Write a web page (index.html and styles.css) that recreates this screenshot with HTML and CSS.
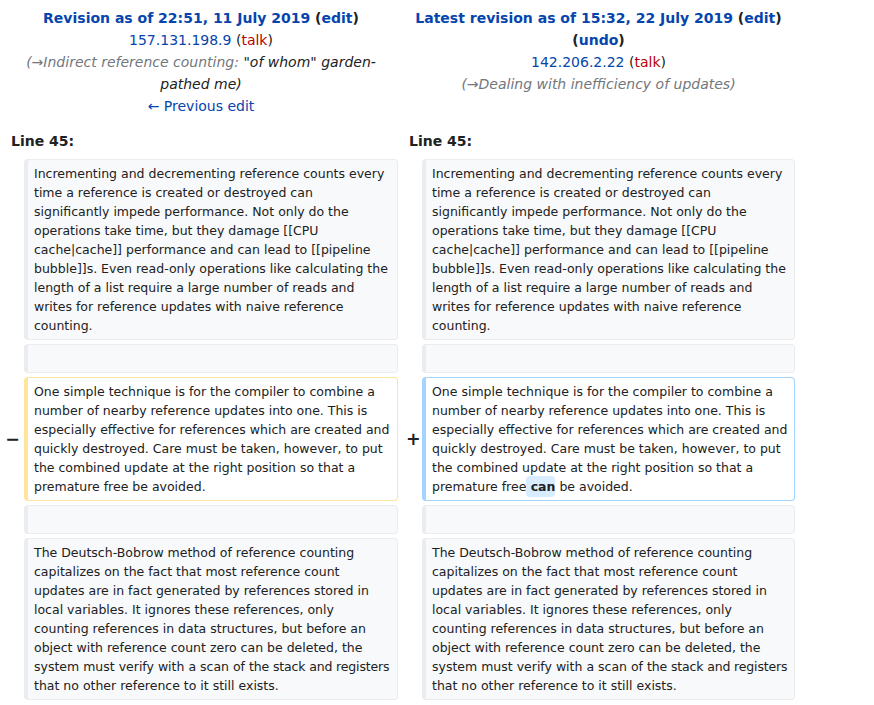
FILE: index.html
```html
<!DOCTYPE html>
<html lang="en">
<head>
<meta charset="utf-8">
<title>Diff</title>
<link rel="stylesheet" href="styles.css">
</head>
<body>
<table class="diff">
  <colgroup>
    <col class="col-marker-l">
    <col class="col-content-l">
    <col class="col-marker-r">
    <col class="col-content-r">
  </colgroup>
  <tr class="title-row">
    <td colspan="2" class="diff-title">
      <div><strong><a href="#">Revision as of 22:51, 11 July 2019</a> <span class="dark">(<a href="#">edit</a>)</span></strong></div>
      <div><a href="#" class="norm">157.131.198.9</a> <span class="dark">(<a href="#" class="new">talk</a>)</span></div>
      <div class="comment"><span class="auto">(→Indirect reference counting:</span> <span class="dark">"of whom" garden-pathed me)</span></div>
      <div><a href="#" class="norm">← Previous edit</a></div>
    </td>
    <td colspan="2" class="diff-title">
      <div><strong><a href="#">Latest revision as of 15:32, 22 July 2019</a> <span class="dark">(<a href="#">edit</a>)</span> <span class="dark">(<a href="#">undo</a>)</span></strong></div>
      <div><a href="#" class="norm">142.206.2.22</a> <span class="dark">(<a href="#" class="new">talk</a>)</span></div>
      <div class="comment"><span class="auto">(→Dealing with inefficiency of updates)</span></div>
    </td>
  </tr>
  <tr>
    <td colspan="2" class="diff-lineno">Line 45:</td>
    <td colspan="2" class="diff-lineno">Line 45:</td>
  </tr>
  <tr>
    <td class="diff-marker"></td>
    <td class="diff-line diff-context">Incrementing and decrementing reference counts every time a reference is created or destroyed can significantly impede performance. Not only do the operations take time, but they damage [[CPU cache|cache]] performance and can lead to [[pipeline bubble]]s. Even read-only operations like calculating the length of a list require a large number of reads and writes for reference updates with naive reference counting.</td>
    <td class="diff-marker"></td>
    <td class="diff-line diff-context">Incrementing and decrementing reference counts every time a reference is created or destroyed can significantly impede performance. Not only do the operations take time, but they damage [[CPU cache|cache]] performance and can lead to [[pipeline bubble]]s. Even read-only operations like calculating the length of a list require a large number of reads and writes for reference updates with naive reference counting.</td>
  </tr>
  <tr>
    <td class="diff-marker"></td>
    <td class="diff-line diff-context"><br></td>
    <td class="diff-marker"></td>
    <td class="diff-line diff-context"><br></td>
  </tr>
  <tr>
    <td class="diff-marker marker-l">−</td>
    <td class="diff-line diff-deleted">One simple technique is for the compiler to combine a number of nearby reference updates into one. This is especially effective for references which are created and quickly destroyed. Care must be taken, however, to put the combined update at the right position so that a premature free be avoided.</td>
    <td class="diff-marker marker-r">+</td>
    <td class="diff-line diff-added">One simple technique is for the compiler to combine a number of nearby reference updates into one. This is especially effective for references which are created and quickly destroyed. Care must be taken, however, to put the combined update at the right position so that a premature free<span class="diffchange"> can</span> be avoided.</td>
  </tr>
  <tr>
    <td class="diff-marker"></td>
    <td class="diff-line diff-context"><br></td>
    <td class="diff-marker"></td>
    <td class="diff-line diff-context"><br></td>
  </tr>
  <tr>
    <td class="diff-marker"></td>
    <td class="diff-line diff-context">The Deutsch-Bobrow method of reference counting capitalizes on the fact that most reference count updates are in fact generated by references stored in local variables. It ignores these references, only counting references in data structures, but before an object with reference count zero can be deleted, the system must verify with a scan of <span class="tight">the stack and registers</span> that no other reference to it still exists.</td>
    <td class="diff-marker"></td>
    <td class="diff-line diff-context">The Deutsch-Bobrow method of reference counting capitalizes on the fact that most reference count updates are in fact generated by references stored in local variables. It ignores these references, only counting references in data structures, but before an object with reference count zero can be deleted, the system must verify with a scan of <span class="tight">the stack and registers</span> that no other reference to it still exists.</td>
  </tr>
</table>
</body>
</html>
```
FILE: styles.css
```css
html, body {
  margin: 0;
  padding: 0;
  background: #ffffff;
}

body {
  font-family: "DejaVu Sans", sans-serif;
  font-size: 14px;
  color: #202122;
}

.diff {
  width: 799px;
  table-layout: fixed;
  border-collapse: separate;
  border-spacing: 4px;
}

.col-marker-l, .col-marker-r { width: 16px; }
.col-content-l { width: 374px; }
.col-content-r { width: 373px; }

.diff td {
  padding: 0;
}

.diff-title {
  text-align: center;
  vertical-align: top;
  line-height: 22px;
  padding: 3px 7px 6px 7px !important;
}

.diff-title a {
  color: #0645ad;
  text-decoration: none;
}

.diff-title a.new {
  color: #ba0000;
}

.dark {
  color: #202122;
}

.comment {
  font-style: italic;
}

.comment .auto {
  color: #72777d;
}

.diff-lineno {
  font-weight: bold;
  line-height: 22px;
  padding: 3px 7px !important;
}

.diff-marker {
  font-weight: bold;
  font-size: 17.5px;
  line-height: 20px;
  text-align: center;
  vertical-align: middle;
  padding-left: 4px !important;
  color: #202122;
}

.diff-marker.marker-l {
  padding-left: 1px !important;
}

.diff-line {
  font-size: 12.5px;
  line-height: 19px;
  vertical-align: top;
  white-space: pre-wrap;
  word-wrap: break-word;
  border-style: solid;
  border-width: 1px 1px 1px 4px;
  border-radius: 4px;
  padding: 4px 5px 4px 6px !important;
  color: #202122;
}

.tight {
  letter-spacing: -0.15px;
}

.diff-context {
  background: #f8f9fa;
  border-color: #eaecf0;
}

.diff-deleted {
  background: #ffffff;
  border-color: #ffe49c;
}

.diff-added {
  background: #ffffff;
  border-color: #a3d3ff;
}

.diffchange {
  font-weight: bold;
  background: #d8ecff;
  border-radius: 4px;
  padding: 3px 0;
}
```
